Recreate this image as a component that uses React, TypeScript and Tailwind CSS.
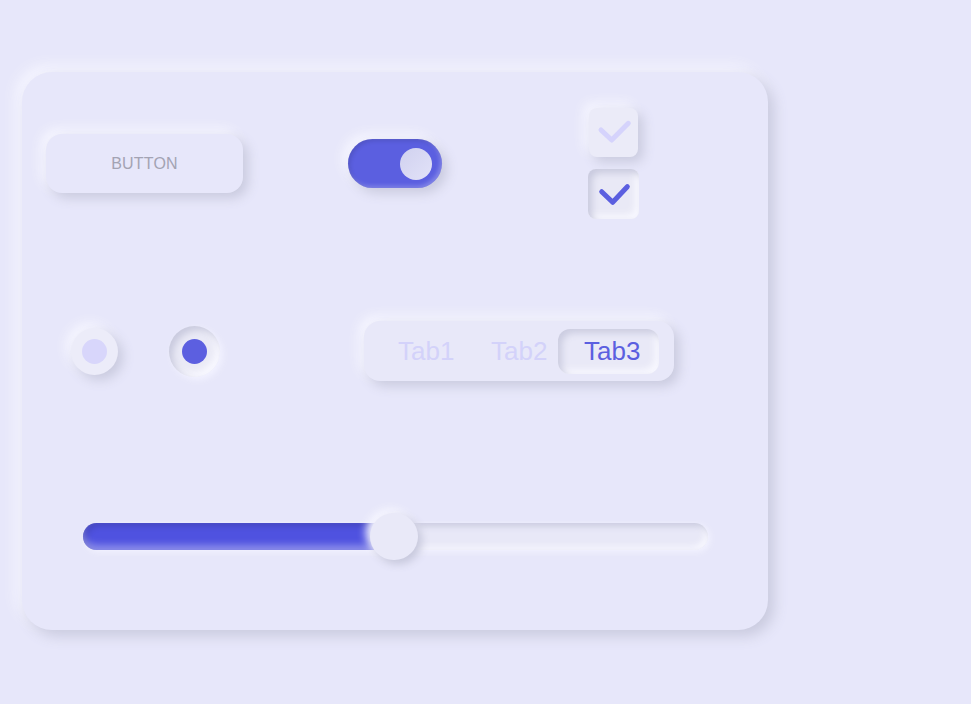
import React from "react";

const raised = "shadow-[5px_5px_12px_#c9cade,-5px_-5px_12px_#f7f7ff]";

export default function App() {
  return (
    <div
      className="w-[971px] h-[704px] bg-[#e7e7fa] overflow-hidden"
      style={{ fontFamily: '"Liberation Sans", Arial, sans-serif' }}
    >
      <div className="ml-[22px] mt-[72px] w-[746px] h-[558px] rounded-[30px] bg-[#e7e7fa] shadow-[6px_6px_14px_#c9cade,-6px_-6px_14px_#f6f6ff] pt-[36px]">
        {/* Row 1 */}
        <div className="flex items-center pl-[24px]">
          <button className={`w-[197px] h-[59px] rounded-[16px] bg-[#e7e7fa] ${raised} text-[16px] text-[#a3a3b3] tracking-[0.2px]`}>
            BUTTON
          </button>
          <div className="ml-[105px] w-[94px] h-[49px] rounded-full bg-[#5b5fe0] shadow-[5px_5px_12px_#c9cade,-5px_-5px_12px_#f7f7ff,inset_2px_2px_4px_rgba(0,0,0,0.12),inset_-2px_-2px_4px_rgba(255,255,255,0.25)] flex items-center justify-end pr-[10px]">
            <div className="w-[32px] h-[32px] rounded-full bg-[linear-gradient(135deg,#d0d1ef,#e2e2f8)]" />
          </div>
          <div className="ml-[146px] flex flex-col gap-[12px]">
            <div className={`w-[49px] h-[49px] rounded-[8px] bg-[#ebebf8] ${raised} ml-[1px]`}>
              <svg width="49" height="49" viewBox="0 0 49 49">
                <path d="M12 22 L22.7 32 L39.3 15.3" fill="none" stroke="#d5d3fc" strokeWidth="5" strokeLinecap="round" strokeLinejoin="round" />
              </svg>
            </div>
            <div className="w-[51px] h-[50px] rounded-[8px] bg-[#e9e9f6] shadow-[inset_4px_4px_7px_#c9cade,inset_-4px_-4px_7px_#f9f9ff]">
              <svg width="51" height="50" viewBox="0 0 51 50">
                <path d="M13.7 22.7 L24.7 33.3 L39.3 17.7" fill="none" stroke="#5b5fe0" strokeWidth="5" strokeLinecap="round" strokeLinejoin="round" />
              </svg>
            </div>
          </div>
        </div>

        {/* Row 2 */}
        <div className="flex items-center pl-[49px] mt-[102px] h-[60px]">
          <div className={`w-[47px] h-[47px] rounded-full bg-[#ececf9] ${raised} flex items-center justify-center`}>
            <div className="w-[25px] h-[25px] rounded-full bg-[#d8d6fb]" />
          </div>
          <div className="ml-[51px] w-[51px] h-[51px] rounded-full bg-[#eaeaf6] shadow-[inset_4px_4px_7px_#c9cade,inset_-4px_-4px_7px_#f9f9ff,3px_3px_6px_#f2f2ff] flex items-center justify-center">
            <div className="w-[25px] h-[25px] rounded-full bg-[#5c5fe0]" />
          </div>
          <div className={`ml-[144px] w-[310px] h-[60px] rounded-[16px] bg-[#e8e8f9] ${raised} flex items-center pl-[34px] pr-[15px] text-[26px] leading-none`}>
            <span className="w-[93px] text-[#d3d2fa]">Tab1</span>
            <span className="w-[67px] text-[#d3d2fa]">Tab2</span>
            <div className="w-[101px] h-[45px] rounded-[12px] bg-[#e9e9f7] shadow-[inset_4px_4px_7px_#cbcce0,inset_-4px_-4px_7px_#f9f9ff] flex items-center pl-[26px] text-[#5b5fe0]">
              Tab3
            </div>
          </div>
        </div>

        {/* Row 3 */}
        <div className="flex items-center pl-[61px] mt-[131px] h-[48px]">
          <div className="relative w-[625px] h-[27px] rounded-full bg-[#e8e8f7] shadow-[inset_3px_3px_6px_#c9cade,inset_-3px_-3px_6px_#f9f9ff,2px_2px_6px_#f3f3ff]">
            <div className="w-[311px] h-[27px] rounded-full bg-[#4f52e0] shadow-[inset_0_-5px_7px_rgba(255,255,255,0.35),inset_3px_3px_6px_rgba(0,0,0,0.15)]" />
            <div className="absolute left-[287px] top-[-10px] w-[48px] h-[47px] rounded-full bg-[#e9e9f8] shadow-[4px_4px_9px_#c6c7db,-4px_-4px_9px_#f7f7ff]" />
          </div>
        </div>
      </div>
    </div>
  );
}
